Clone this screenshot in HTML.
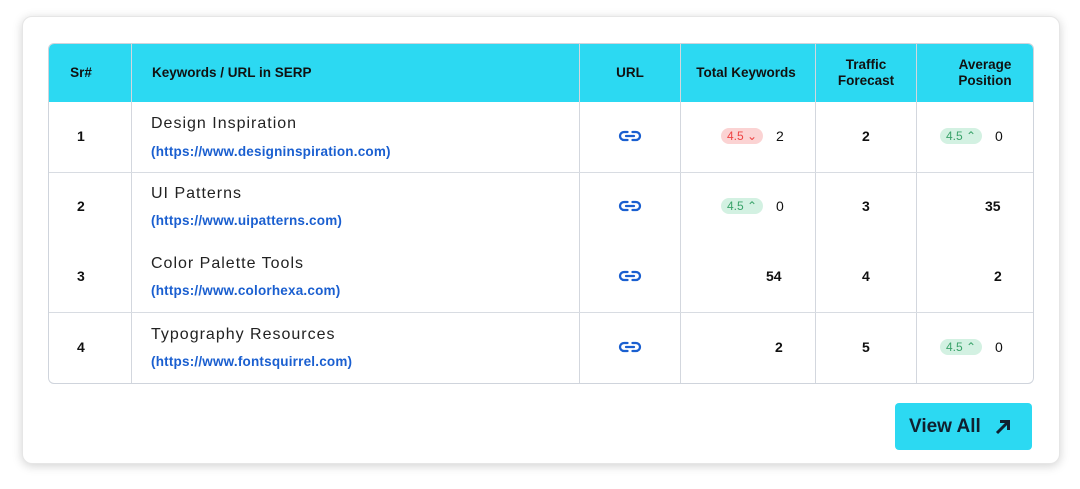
<!DOCTYPE html>
<html><head><style>
body{margin:0;width:1080px;height:489px;background:#fff;font-family:"Liberation Sans",Arial,sans-serif;position:relative;overflow:hidden}
.card{position:absolute;left:22px;top:16px;width:1038px;height:448px;border-radius:10px;background:#fff;box-shadow:0 2px 10px rgba(0,0,0,.18);border:1px solid #e6e6e6;box-sizing:border-box}
.tbl{position:absolute;left:48px;top:43px;width:986px;height:341px;border:1px solid #cfd4dc;border-radius:6px;box-sizing:border-box;overflow:hidden}
.hdr{position:absolute;left:0;top:0;width:100%;height:58px;background:#2cd9f2}
.v{position:absolute;top:0;height:100%;width:1px;background:#d3d7de}
.hv{background:#1ebed6}
.h{position:absolute;height:1px;left:0;width:100%;background:#d8dce2}
.t{position:absolute;font-size:14px;color:#111;white-space:nowrap}
.b{font-weight:bold}
.hd{font-weight:bold;font-size:13.5px;color:#111;line-height:16px;text-align:center}
.kw{font-size:16px;color:#222;letter-spacing:1px}
.url{font-size:13.5px;font-weight:bold;color:#1a5fd0;letter-spacing:.2px}
.pill{position:absolute;height:16px;width:42px;border-radius:8px;font-size:12px;line-height:16px;text-align:left;padding-left:6px;box-sizing:border-box}
.red{background:#fbd3d3;color:#e44}
.grn{background:#d3f1e2;color:#3aa36a}
.btn{position:absolute;left:895px;top:403px;width:137px;height:47px;background:#2cd9f2;border-radius:4px;font-size:19px;font-weight:bold;color:#102030}
</style></head><body>
<div class="card"></div>
<div class="tbl">
<div class="hdr"></div>
<div class="v hv" style="left:82px;height:58px"></div>
<div class="v" style="left:82px"></div>
<div class="v" style="left:530px"></div>
<div class="v" style="left:631px"></div>
<div class="v" style="left:766px"></div>
<div class="v" style="left:867px"></div>
<div class="h" style="top:128px"></div>
<div class="h" style="top:268px"></div>
<div class="t hd" style="left:0;width:64px;top:21px">Sr#</div>
<div class="t hd" style="left:103px;top:21px">Keywords / URL in SERP</div>
<div class="t hd" style="left:531px;width:100px;top:21px">URL</div>
<div class="t hd" style="left:632px;width:130px;top:21px">Total Keywords</div>
<div class="t hd" style="left:767px;width:100px;top:13px">Traffic<br>Forecast</div>
<div class="t hd" style="left:886px;width:100px;top:13px">Average<br>Position</div>
</div>
<div class="t b" style="left:77px;top:128px">1</div>
<div class="t b" style="left:77px;top:198px">2</div>
<div class="t b" style="left:77px;top:268px">3</div>
<div class="t b" style="left:77px;top:339px">4</div>

<div class="t kw" style="left:151px;top:115px">Design Inspiration</div>
<div class="t url" style="left:151px;top:144px">(https://www.designinspiration.com)</div>
<div class="t kw" style="left:151px;top:185px">UI Patterns</div>
<div class="t url" style="left:151px;top:213px">(https://www.uipatterns.com)</div>
<div class="t kw" style="left:151px;top:255px">Color Palette Tools</div>
<div class="t url" style="left:151px;top:283px">(https://www.colorhexa.com)</div>
<div class="t kw" style="left:151px;top:326px">Typography Resources</div>
<div class="t url" style="left:151px;top:354px">(https://www.fontsquirrel.com)</div>

<svg style="position:absolute;left:618px;top:129px" width="24" height="14" viewBox="0 0 24 14"><g fill="none" stroke="#1a5fd0" stroke-width="2.3" stroke-linecap="round"><path d="M9.5 3H6a4 4 0 0 0 0 8h3.5M14.5 3H18a4 4 0 0 1 0 8h-3.5M8 7h8"/></g></svg>
<svg style="position:absolute;left:618px;top:199px" width="24" height="14" viewBox="0 0 24 14"><g fill="none" stroke="#1a5fd0" stroke-width="2.3" stroke-linecap="round"><path d="M9.5 3H6a4 4 0 0 0 0 8h3.5M14.5 3H18a4 4 0 0 1 0 8h-3.5M8 7h8"/></g></svg>
<svg style="position:absolute;left:618px;top:269px" width="24" height="14" viewBox="0 0 24 14"><g fill="none" stroke="#1a5fd0" stroke-width="2.3" stroke-linecap="round"><path d="M9.5 3H6a4 4 0 0 0 0 8h3.5M14.5 3H18a4 4 0 0 1 0 8h-3.5M8 7h8"/></g></svg>
<svg style="position:absolute;left:618px;top:340px" width="24" height="14" viewBox="0 0 24 14"><g fill="none" stroke="#1a5fd0" stroke-width="2.3" stroke-linecap="round"><path d="M9.5 3H6a4 4 0 0 0 0 8h3.5M14.5 3H18a4 4 0 0 1 0 8h-3.5M8 7h8"/></g></svg>

<div class="pill red" style="left:721px;top:128px">4.5 ⌄</div>
<div class="t" style="left:776px;top:128px">2</div>
<div class="pill grn" style="left:721px;top:198px">4.5 ⌃</div>
<div class="t" style="left:776px;top:198px">0</div>
<div class="t b" style="left:766px;top:268px">54</div>
<div class="t b" style="left:775px;top:339px">2</div>

<div class="t b" style="left:862px;top:128px">2</div>
<div class="t b" style="left:862px;top:198px">3</div>
<div class="t b" style="left:862px;top:268px">4</div>
<div class="t b" style="left:862px;top:339px">5</div>

<div class="pill grn" style="left:940px;top:128px">4.5 ⌃</div>
<div class="t" style="left:995px;top:128px">0</div>
<div class="t b" style="left:985px;top:198px">35</div>
<div class="t b" style="left:994px;top:268px">2</div>
<div class="pill grn" style="left:940px;top:339px">4.5 ⌃</div>
<div class="t" style="left:995px;top:339px">0</div>

<div class="btn"><span style="position:absolute;left:14px;top:13px">View All</span>
<svg style="position:absolute;left:99px;top:15px" width="18" height="18" viewBox="0 0 18 18"><path d="M3 15L14 4M6 3.5h8.5V12" fill="none" stroke="#102030" stroke-width="3"/></svg></div>
</body></html>
